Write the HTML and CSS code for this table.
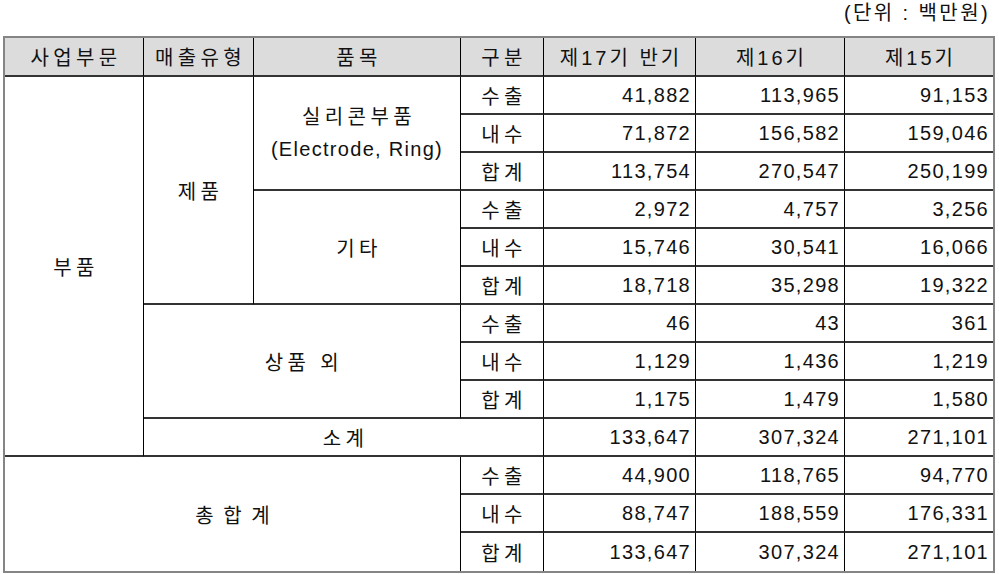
FILE: index.html
```html
<!DOCTYPE html>
<html lang="ko">
<head>
<meta charset="utf-8">
<title>매출실적</title>
<link rel="stylesheet" href="styles.css">
</head>
<body>
<div class="unit">(단위 : 백만원)</div>
<table class="sales">
  <thead>
    <tr>
      <th class="c1 ko">사업부문</th>
      <th class="c2 ko">매출유형</th>
      <th class="c3 ko">품목</th>
      <th class="c4 ko">구분</th>
      <th class="c5 mix">제17기 반기</th>
      <th class="c6 mix">제16기</th>
      <th class="c7 mix">제15기</th>
    </tr>
  </thead>
  <tbody>
    <tr>
      <td rowspan="10" class="ctr ko">부품</td>
      <td rowspan="6" class="ctr ko">제품</td>
      <td rowspan="3" class="ctr two"><span class="kos">실리콘부품</span><br>(Electrode, Ring)</td>
      <td class="ctr ko">수출</td>
      <td class="num">41,882</td>
      <td class="num">113,965</td>
      <td class="num">91,153</td>
    </tr>
    <tr>
      <td class="ctr ko">내수</td>
      <td class="num">71,872</td>
      <td class="num">156,582</td>
      <td class="num">159,046</td>
    </tr>
    <tr>
      <td class="ctr ko">합계</td>
      <td class="num">113,754</td>
      <td class="num">270,547</td>
      <td class="num">250,199</td>
    </tr>
    <tr>
      <td rowspan="3" class="ctr ko">기타</td>
      <td class="ctr ko">수출</td>
      <td class="num">2,972</td>
      <td class="num">4,757</td>
      <td class="num">3,256</td>
    </tr>
    <tr>
      <td class="ctr ko">내수</td>
      <td class="num">15,746</td>
      <td class="num">30,541</td>
      <td class="num">16,066</td>
    </tr>
    <tr>
      <td class="ctr ko">합계</td>
      <td class="num">18,718</td>
      <td class="num">35,298</td>
      <td class="num">19,322</td>
    </tr>
    <tr>
      <td rowspan="3" colspan="2" class="ctr ko">상품 외</td>
      <td class="ctr ko">수출</td>
      <td class="num">46</td>
      <td class="num">43</td>
      <td class="num">361</td>
    </tr>
    <tr>
      <td class="ctr ko">내수</td>
      <td class="num">1,129</td>
      <td class="num">1,436</td>
      <td class="num">1,219</td>
    </tr>
    <tr>
      <td class="ctr ko">합계</td>
      <td class="num">1,175</td>
      <td class="num">1,479</td>
      <td class="num">1,580</td>
    </tr>
    <tr>
      <td colspan="3" class="ctr ko">소계</td>
      <td class="num">133,647</td>
      <td class="num">307,324</td>
      <td class="num">271,101</td>
    </tr>
    <tr>
      <td rowspan="3" colspan="3" class="ctr ko total last">총 합 계</td>
      <td class="ctr ko">수출</td>
      <td class="num">44,900</td>
      <td class="num">118,765</td>
      <td class="num">94,770</td>
    </tr>
    <tr>
      <td class="ctr ko">내수</td>
      <td class="num">88,747</td>
      <td class="num">188,559</td>
      <td class="num">176,331</td>
    </tr>
    <tr class="lastrow">
      <td class="ctr ko">합계</td>
      <td class="num">133,647</td>
      <td class="num">307,324</td>
      <td class="num">271,101</td>
    </tr>
  </tbody>
</table>
</body>
</html>
```

FILE: styles.css
```css
html, body {
  margin: 0;
  padding: 0;
  background: #ffffff;
}

body {
  font-family: "Liberation Sans", "Noto Sans CJK KR", sans-serif;
  font-size: 20px;
  letter-spacing: 1.3px;
  color: #111111;
}

.unit {
  height: 36px;
  line-height: 26px;
  text-align: right;
  padding-right: 9px;
  box-sizing: border-box;
  letter-spacing: 2.4px;
}

.sales {
  margin-left: 3px;
  width: 992px;
  table-layout: fixed;
  border-collapse: separate;
  border-spacing: 0;
  border: 2px solid #858585;
}

.sales th,
.sales td {
  box-sizing: border-box;
  padding: 0;
  border-right: 1px solid #000000;
  border-bottom: 2px solid #333333;
  height: 38px;
  font-weight: normal;
  white-space: nowrap;
  vertical-align: middle;
}

.sales th {
  background: #dcdcdc;
  height: 39px;
  text-align: center;
}

.sales tr > :last-child {
  border-right: none;
}

.sales .lastrow td,
.sales td.last {
  border-bottom: none;
}

.c1 { width: 139px; }
.c2 { width: 110px; }
.c3 { width: 207px; }
.c4 { width: 83px; }
.c5 { width: 152px; }
.c6 { width: 149px; }
.c7 { width: 148px; }

.ctr {
  text-align: center;
}

.sales .ko {
  letter-spacing: 4.4px;
  padding-left: 4px;
}

.sales .mix {
  letter-spacing: 3px;
  padding-left: 3px;
}

.kos {
  letter-spacing: 4.4px;
  padding-left: 4px;
}

.sales .total {
  letter-spacing: 2px;
  padding-left: 2px;
}

.two {
  line-height: 32px;
}

.num {
  text-align: right;
  padding-right: 4px !important;
}
```
